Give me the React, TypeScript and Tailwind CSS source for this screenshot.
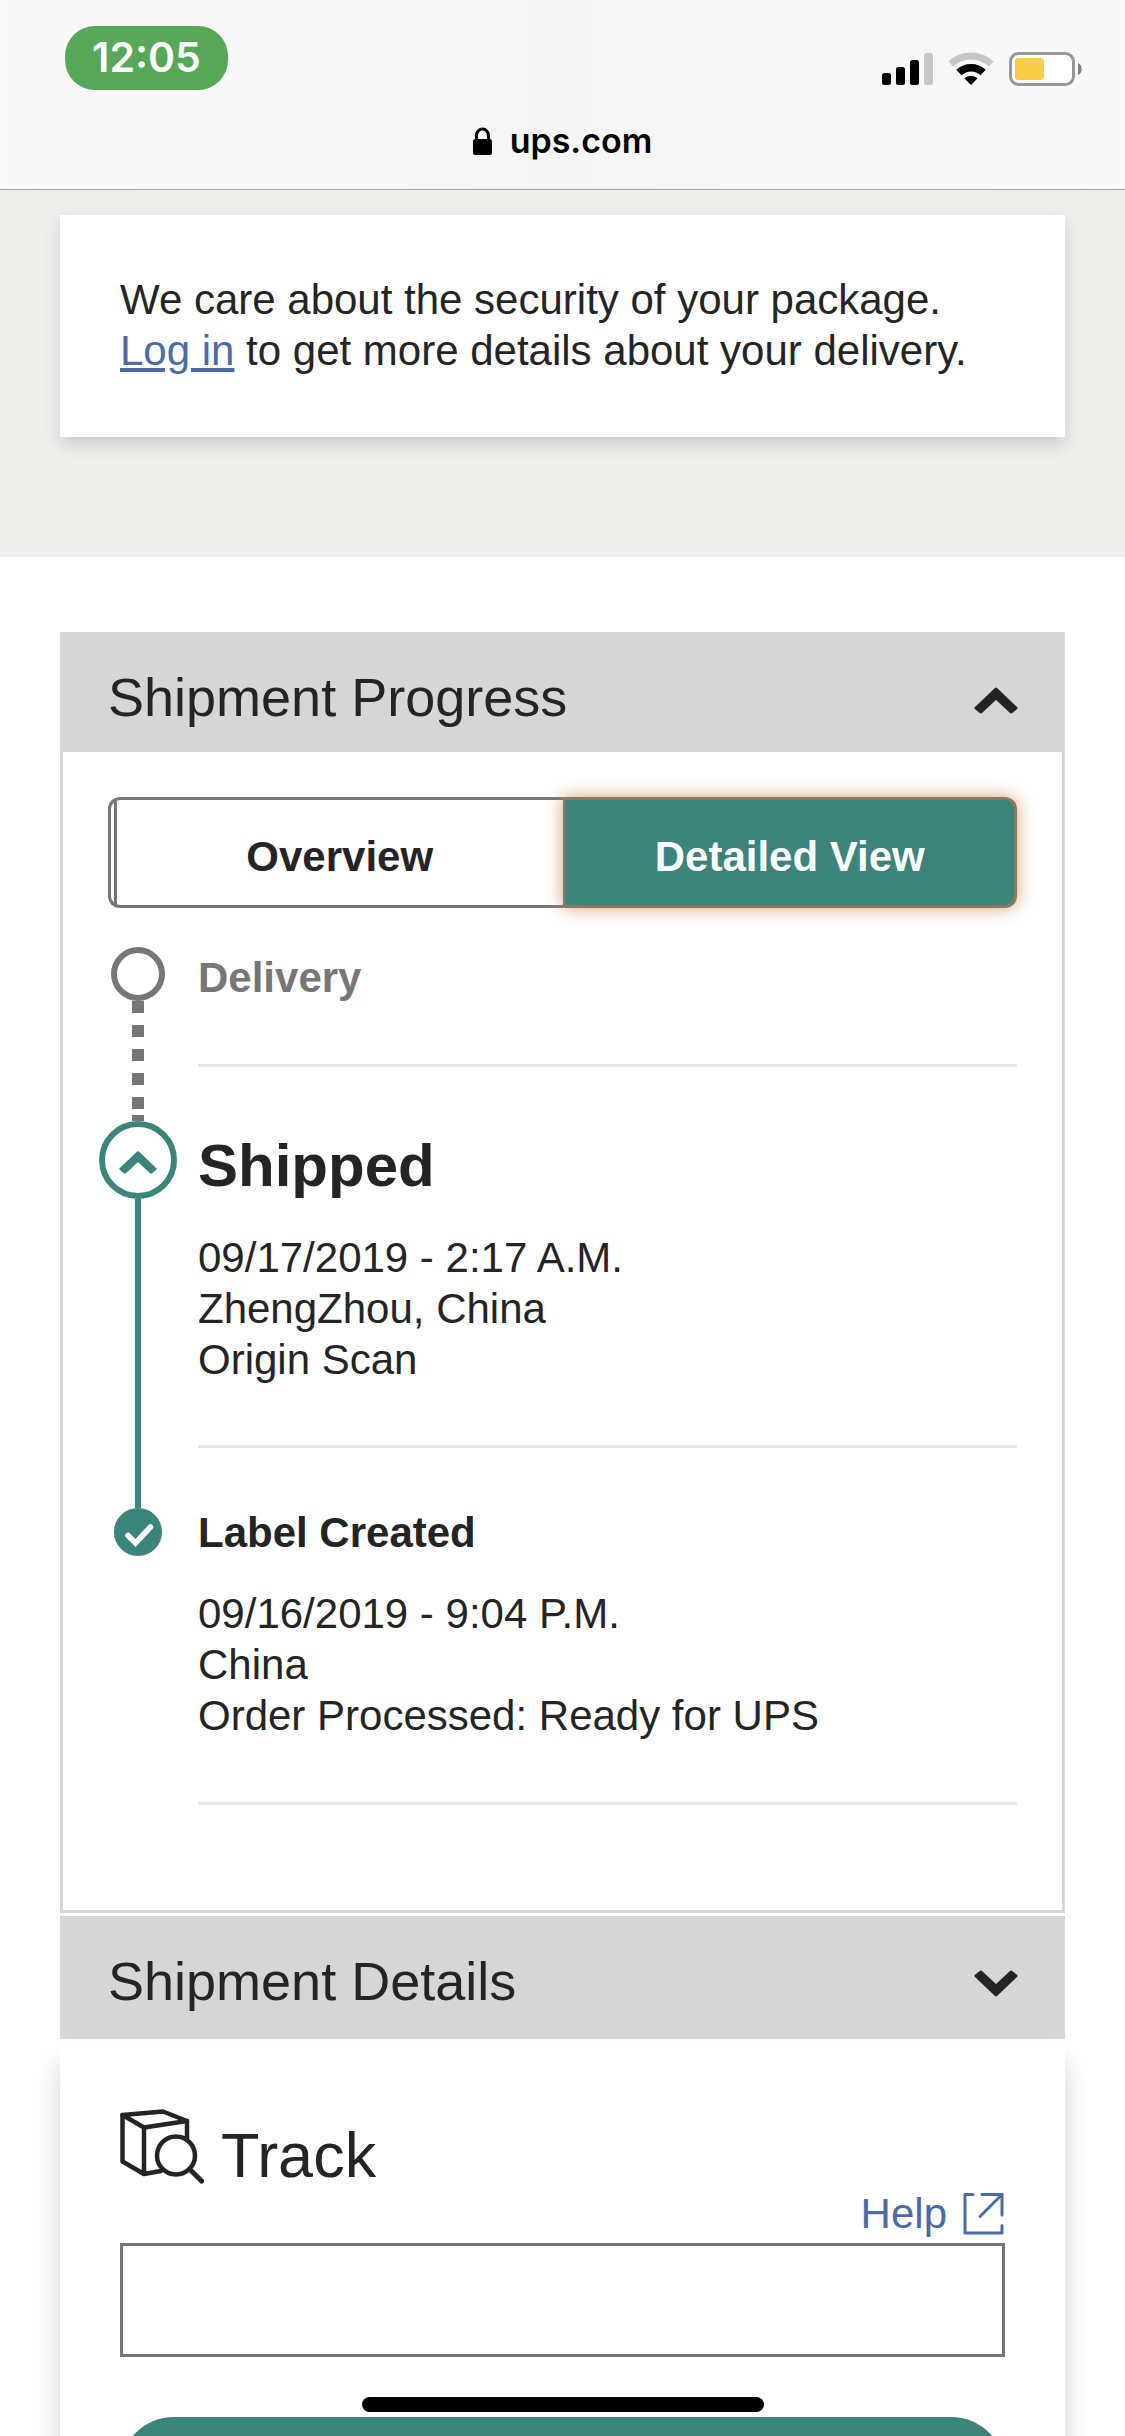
import React, { useState } from 'react';

function Chevron({ up = false, className = '' }: { up?: boolean; className?: string }) {
  return (
    <svg viewBox="0 0 44 28" fill="currentColor" stroke="currentColor" strokeWidth="3" strokeLinejoin="round" className={className} aria-hidden="true">
      <path
        d={
          up
            ? 'M22 3L42 22L37 26L22 12L7 26L2 22Z'
            : 'M22 25L42 6L37 2L22 16L7 2L2 6Z'
        }
      />
    </svg>
  );
}

function StatusIcons() {
  return (
    <div className="flex items-end gap-[15px] pb-1">
      <svg viewBox="0 0 51 33" className="w-[51px] h-[33px]" aria-label="Signal">
        <rect x="0" y="20" width="9" height="12" rx="2.5" />
        <rect x="14" y="14" width="9" height="18" rx="2.5" />
        <rect x="28" y="7" width="9" height="25" rx="2.5" />
        <rect x="42" y="0" width="9" height="32" rx="2.5" fill="#c6c6c6" />
      </svg>
      <svg viewBox="0 0 46 34" className="w-[46px] h-[34px]" fill="none" aria-label="Wi-Fi">
        <path d="M2.8 12.1A29 29 0 0 1 43.2 12.1" stroke="#c6c6c6" strokeWidth="7" />
        <path d="M10.9 20.5A17.5 17.5 0 0 1 35.1 20.5" stroke="#000" strokeWidth="7.5" />
        <path d="M23 33L16.3 26.3A10 10 0 0 1 29.7 26.3Z" fill="#000" />
      </svg>
      <svg viewBox="0 0 74 34" className="w-[74px] h-[34px]" fill="none" aria-label="Battery">
        <rect x="1.5" y="1.5" width="63" height="31" rx="8" fill="#fff" stroke="#979797" strokeWidth="3" />
        <rect x="6" y="6" width="29" height="22" rx="3.5" fill="#f7ce46" />
        <path d="M69 11C74 13 74 21 69 23Z" fill="#808080" />
      </svg>
    </div>
  );
}

function BrowserBar() {
  return (
    <header className="shrink-0 border-b border-[#a3a3a3] bg-gradient-to-r from-[#f9f9f9] via-[#f5f5f5] to-[#f9f9f9] pt-[26px] font-['Inter',sans-serif] text-black">
      <div className="flex items-end justify-between pl-[65px] pr-[42px]">
        <div className="flex h-16 w-[163px] items-center justify-center rounded-[30px] bg-[#56a758] text-[41px] font-semibold text-white">
          12:05
        </div>
        <StatusIcons />
      </div>
      <div className="flex items-center justify-center gap-[18px] pt-[31px] pb-7 text-[34px] leading-10 font-semibold">
        <svg viewBox="0 0 19 28" className="w-[19px] h-7" fill="none" aria-hidden="true">
          <rect x="0" y="12" width="19" height="16" rx="2.5" fill="#000" />
          <path d="M3.5 13V8.5a6 6.5 0 0 1 12 0V13" stroke="#000" strokeWidth="3" />
        </svg>
        <span>ups.com</span>
      </div>
    </header>
  );
}

function PanelHeader({ title, open, onClick }: { title: string; open: boolean; onClick?: () => void }) {
  return (
    <h2>
      <button
        type="button"
        aria-expanded={open}
        onClick={onClick}
        className="flex h-[117px] w-full items-center justify-between bg-[#d6d6d6] pr-11 pl-[45px] pt-2 text-left text-[54px]"
      >
        <span>{title}</span>
        <Chevron up={open} className="mt-1 h-7 w-11" />
      </button>
    </h2>
  );
}

function ViewToggle() {
  const [view, setView] = useState('detailed');
  return (
    <div className="ml-[9px] flex h-[111px] text-[42px] font-bold">
      <button
        type="button"
        aria-pressed={view === 'overview'}
        onClick={() => setView('overview')}
        className="flex flex-1 rounded-l-xl border-[3px] border-r-0 border-[#767676] bg-white pl-[3px]"
      >
        <span className="flex h-full flex-1 items-center justify-center border-l-[3px] border-[#767676] pt-2">
          Overview
        </span>
      </button>
      <button
        type="button"
        aria-pressed={view === 'detailed'}
        onClick={() => setView('detailed')}
        className="flex-1 rounded-r-xl border-[3px] border-[#90775c] border-l-[#6f7d78] bg-[#3b837b] pt-2 text-white shadow-[0_0_18px_rgba(195,125,50,0.7)]"
      >
        Detailed View
      </button>
    </div>
  );
}

function Details({ lines }: { lines: string[] }) {
  return (
    <div className="mt-[30px]">
      {lines.map((line) => (
        <p key={line}>{line}</p>
      ))}
    </div>
  );
}

function Timeline() {
  return (
    <ol className="mt-[39px] text-[42px] leading-[51px]">
      <li className="flex gap-[21px]">
        <div className="flex w-[78px] flex-col items-center">
          <span className="size-[54px] rounded-full border-[6px] border-[#767676]" />
          <span className="w-3 flex-1 bg-[repeating-linear-gradient(#767676_0_12px,transparent_12px_24px)]" />
        </div>
        <div className="flex-1 border-b-[3px] border-[#e6e6e6] pt-[5px] pb-[61px]">
          <h3 className="font-bold text-[#767676]">Delivery</h3>
        </div>
      </li>
      <li className="flex gap-[21px]">
        <div className="flex w-[78px] flex-col items-center text-[#3b837b]">
          <span className="h-12 w-3 bg-[repeating-linear-gradient(transparent_0_6px,#767676_6px_18px,transparent_18px_24px)]" />
          <span className="h-1.5 w-3 bg-[#767676]" />
          <button
            type="button"
            aria-label="Collapse Shipped"
            className="flex size-[78px] items-center justify-center rounded-full border-[6px] border-current"
          >
            <Chevron up className="mt-1 h-[26px] w-[38px]" />
          </button>
          <span className="w-1.5 flex-1 bg-current" />
        </div>
        <div className="flex-1 border-b-[3px] border-[#e6e6e6] pt-[63px] pb-[60px]">
          <h3 className="text-[60px] leading-[72px] font-bold">Shipped</h3>
          <Details lines={['09/17/2019 - 2:17 A.M.', 'ZhengZhou, China', 'Origin Scan']} />
        </div>
      </li>
      <li className="flex gap-[21px]">
        <div className="flex w-[78px] flex-col items-center">
          <span className="h-[60px] w-1.5 bg-[#3b837b]" />
          <svg viewBox="0 0 48 48" className="size-12" fill="none" strokeLinecap="round" aria-hidden="true">
            <circle cx="24" cy="24" r="24" fill="#3b837b" />
            <path d="M14 27.5L21.5 35L36.5 19" stroke="#fff" strokeWidth="5.5" />
          </svg>
        </div>
        <div className="flex-1 border-b-[3px] border-[#e6e6e6] pt-[59px] pb-[61px]">
          <h3 className="font-bold">Label Created</h3>
          <Details lines={['09/16/2019 - 9:04 P.M.', 'China', 'Order Processed: Ready for UPS']} />
        </div>
      </li>
    </ol>
  );
}

function TrackCard() {
  return (
    <section className="mt-1.5 bg-white px-[60px] pt-16 shadow-[0_18px_24px_rgba(0,0,0,0.18)]">
      <div className="flex items-start gap-[17px]">
        <svg
          viewBox="0 0 84 75"
          className="h-[75px] w-[84px]"
          fill="none"
          stroke="#242424"
          strokeWidth="4.5"
          strokeLinejoin="round"
          strokeLinecap="round"
          aria-hidden="true"
        >
          <path d="M2.5 6L43 2.5L67 12L24 18.5Z" />
          <path d="M2.5 6V52.5L24 65V18.5M24 65L41 62M67 12V31" />
          <circle cx="56" cy="46.5" r="19" />
          <path d="M70.5 61L81.5 72" strokeWidth="5" />
        </svg>
        <h2 className="pt-[11px] text-[63px] leading-[70px]">Track</h2>
      </div>
      <div className="mb-[5px] flex justify-end">
        <a href="#help" className="flex items-center gap-4 text-[42px] leading-[48px] text-[#4b6ba4]">
          Help
          <svg
            viewBox="0 0 42 42"
            className="size-[42px]"
            fill="none"
            stroke="currentColor"
            strokeWidth="3"
            strokeLinecap="round"
            strokeLinejoin="round"
            aria-hidden="true"
          >
            <path d="M10 1.5H2V40H39V32.5" />
            <path d="M19 1.5H39V22" />
            <path d="M39 1.5L17 23.5" />
          </svg>
        </a>
      </div>
      <input
        type="text"
        aria-label="Tracking number"
        className="block h-[114px] w-full border-[3px] border-[#767676] bg-white px-6 text-[42px] outline-none"
      />
      <button type="button" aria-label="Track" className="mt-[60px] block h-[108px] w-full rounded-full bg-[#3b837b]" />
    </section>
  );
}

export default function App() {
  const [detailsOpen, setDetailsOpen] = useState(false);

  return (
    <div className="relative flex h-screen flex-col overflow-hidden bg-white font-['Liberation_Sans',Arial,sans-serif] text-[#242424]">
      <BrowserBar />
      <main className="min-h-0 flex-1 overflow-hidden">
        <div className="bg-[#efefee] px-[60px] pt-[25px] pb-[120px]">
          <div className="bg-white px-[60px] pt-[59px] pb-[61px] text-[42px] leading-[51px] shadow-[0_8px_16px_rgba(0,0,0,0.15)]">
            <p>We care about the security of your package.</p>
            <p>
              <a href="#login" className="text-[#4b6ba4] underline">Log in</a> to get more details about your delivery.
            </p>
          </div>
        </div>

        <div className="px-[60px] pt-[75px]">
          <section className="border-[3px] border-[#d6d6d6]">
            <PanelHeader title="Shipment Progress" open />
            <div className="pt-[45px] pr-[45px] pb-[105px] pl-9">
              <ViewToggle />
              <Timeline />
            </div>
          </section>
          <section className="mt-[3px] border-[3px] border-[#d6d6d6]">
            <PanelHeader title="Shipment Details" open={detailsOpen} onClick={() => setDetailsOpen(!detailsOpen)} />
          </section>
          <TrackCard />
        </div>
      </main>
      {/* home indicator */}
      <div className="absolute bottom-6 left-1/2 h-[15px] w-[402px] -translate-x-1/2 rounded-full bg-black" />
    </div>
  );
}
